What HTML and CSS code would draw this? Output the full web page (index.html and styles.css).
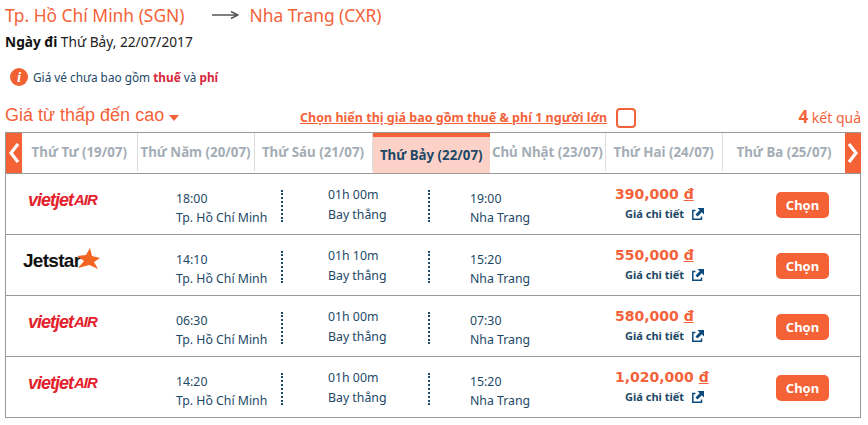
FILE: index.html
```html
<!DOCTYPE html>
<html lang="vi">
<head>
<meta charset="utf-8">
<title>Chọn chuyến bay</title>
<link rel="stylesheet" href="styles.css">
</head>
<body>
<header class="route">
  <span>Tp. Hồ Chí Minh (SGN)</span>
  <svg class="route-arrow" width="27" height="10" viewBox="0 0 27 10"><path d="M0 5H25M19 1.500L26 5L19 8.500" fill="none" stroke="#555" stroke-width="1.5"/></svg>
  <span>Nha Trang (CXR)</span>
</header>
<p class="depart"><b>Ngày đi</b> Thứ Bảy, 22/07/2017</p>
<p class="notice">
  <span class="info-icon">i</span>
  <span>Giá vé chưa bao gồm <b>thuế</b> và <b>phí</b></span>
</p>
<div class="toolbar">
  <div class="sort">Giá từ thấp đến cao <i class="caret"></i></div>
  <div class="tax-toggle"><a href="#">Chọn hiển thị giá bao gồm thuế &amp; phí 1 người lớn</a><span class="checkbox"></span></div>
  <div class="count"><b>4</b> kết quả</div>
</div>
<section class="board">
  <nav class="days">
    <button class="day-arrow"><svg width="12" height="22" viewBox="0 0 12 22"><path d="M10 2L3 11L10 20" fill="none" stroke="#fff" stroke-width="3.2"/></svg></button>
    <div class="day">Thứ Tư (19/07)</div>
    <div class="day">Thứ Năm (20/07)</div>
    <div class="day">Thứ Sáu (21/07)</div>
    <div class="day active">Thứ Bảy (22/07)</div>
    <div class="day">Chủ Nhật (23/07)</div>
    <div class="day">Thứ Hai (24/07)</div>
    <div class="day last">Thứ Ba (25/07)</div>
    <button class="day-arrow"><svg width="12" height="22" viewBox="0 0 12 22"><path d="M2 2L9 11L2 20" fill="none" stroke="#fff" stroke-width="3.2"/></svg></button>
  </nav>

  <article class="flight">
    <div class="logo vj"><span>vietjet</span><small>AIR</small></div>
    <div class="leg"><span>18:00</span><span>Tp. Hồ Chí Minh</span></div>
    <i class="dots"></i>
    <div class="leg mid"><span>01h 00m</span><span>Bay thẳng</span></div>
    <i class="dots"></i>
    <div class="leg end"><span>19:00</span><span>Nha Trang</span></div>
    <div class="fare"><div class="price">390,000 <u>đ</u></div><div class="detail">Giá chi tiết <svg class="ext" width="12" height="12" viewBox="0 0 12 12"><path d="M3.500 2.500H.8V11.200H9.500V8.500" fill="none" stroke="#0b4a7d" stroke-width="1.5"/><path d="M5.500 0H12V6.500L9.800 4.300L5.500 8.500L3.500 6.500L7.700 2.200Z" fill="#0b4a7d"/></svg></div></div>
    <a class="pick" href="#">Chọn</a>
  </article>
  <article class="flight">
    <div class="logo js"><span>Jetstar</span><svg width="24" height="22" viewBox="0 0 24 22"><polygon points="13,0 15,8 23,10 17,14 21,21 12.500,17 1,20 7,13 0,8 9,7" fill="#f26522"/></svg></div>
    <div class="leg"><span>14:10</span><span>Tp. Hồ Chí Minh</span></div>
    <i class="dots"></i>
    <div class="leg mid"><span>01h 10m</span><span>Bay thẳng</span></div>
    <i class="dots"></i>
    <div class="leg end"><span>15:20</span><span>Nha Trang</span></div>
    <div class="fare"><div class="price">550,000 <u>đ</u></div><div class="detail">Giá chi tiết <svg class="ext" width="12" height="12" viewBox="0 0 12 12"><path d="M3.500 2.500H.8V11.200H9.500V8.500" fill="none" stroke="#0b4a7d" stroke-width="1.5"/><path d="M5.500 0H12V6.500L9.800 4.300L5.500 8.500L3.500 6.500L7.700 2.200Z" fill="#0b4a7d"/></svg></div></div>
    <a class="pick" href="#">Chọn</a>
  </article>
  <article class="flight">
    <div class="logo vj"><span>vietjet</span><small>AIR</small></div>
    <div class="leg"><span>06:30</span><span>Tp. Hồ Chí Minh</span></div>
    <i class="dots"></i>
    <div class="leg mid"><span>01h 00m</span><span>Bay thẳng</span></div>
    <i class="dots"></i>
    <div class="leg end"><span>07:30</span><span>Nha Trang</span></div>
    <div class="fare"><div class="price">580,000 <u>đ</u></div><div class="detail">Giá chi tiết <svg class="ext" width="12" height="12" viewBox="0 0 12 12"><path d="M3.500 2.500H.8V11.200H9.500V8.500" fill="none" stroke="#0b4a7d" stroke-width="1.5"/><path d="M5.500 0H12V6.500L9.800 4.300L5.500 8.500L3.500 6.500L7.700 2.200Z" fill="#0b4a7d"/></svg></div></div>
    <a class="pick" href="#">Chọn</a>
  </article>
  <article class="flight">
    <div class="logo vj"><span>vietjet</span><small>AIR</small></div>
    <div class="leg"><span>14:20</span><span>Tp. Hồ Chí Minh</span></div>
    <i class="dots"></i>
    <div class="leg mid"><span>01h 00m</span><span>Bay thẳng</span></div>
    <i class="dots"></i>
    <div class="leg end"><span>15:20</span><span>Nha Trang</span></div>
    <div class="fare"><div class="price">1,020,000 <u>đ</u></div><div class="detail">Giá chi tiết <svg class="ext" width="12" height="12" viewBox="0 0 12 12"><path d="M3.500 2.500H.8V11.200H9.500V8.500" fill="none" stroke="#0b4a7d" stroke-width="1.5"/><path d="M5.500 0H12V6.500L9.800 4.300L5.500 8.500L3.500 6.500L7.700 2.200Z" fill="#0b4a7d"/></svg></div></div>
    <a class="pick" href="#">Chọn</a>
  </article>
</section>
</body>
</html>
```
FILE: styles.css
```css
* { box-sizing: border-box; }
html, body { margin: 0; padding: 0; }
body {
  width: 868px;
  height: 425px;
  overflow: hidden;
  background: #fff;
  padding: 0 7px 0 5px;
  font-family: "Noto Sans", "DejaVu Sans", sans-serif;
  color: #1d4866;
  font-size: 12px;
}
p { margin: 0; }
.route {
  display: flex;
  align-items: center;
  height: 32px;
  padding-bottom: 2px;
  color: #f4623a;
  font-size: 17.400px;
  white-space: nowrap;
}
.route-arrow { margin: 0 11px 0 27px; }
.depart { height: 19px; line-height: 19px; font-size: 13.700px; color: #222; }
.depart b { color: #111; }
.notice {
  display: flex;
  align-items: center;
  gap: 5px;
  margin: 16px 0 0 5px;
  height: 20px;
  font-size: 11.800px;
}
.notice b { color: #d7263d; }
.info-icon {
  width: 18px;
  height: 18px;
  border-radius: 50%;
  background: #f26133;
  color: #fff;
  font: italic bold 15px/18px "Liberation Serif", serif;
  text-align: center;
}
.toolbar {
  display: flex;
  align-items: center;
  height: 28px;
  margin: 16px 0 1px;
  white-space: nowrap;
}
.sort { width: 295px; margin-top: -3px; font-size: 18px; color: #f4623a; font-family: "Liberation Sans", sans-serif; }
.caret {
  display: inline-block;
  margin: 4px 0 0;
  vertical-align: middle;
  border: 5.500px solid transparent;
  border-top: 6px solid #f4623a;
  border-bottom: 0;
}
.tax-toggle { display: flex; align-items: center; gap: 9px; padding-top: 1px; }
.tax-toggle a { color: #f4623a; font-weight: 700; font-size: 12.540px; text-decoration: underline; }
.checkbox { width: 20px; height: 20px; border: 2px solid #f4623a; border-radius: 4px; }
.count { margin: -2px 0 0 auto; font-size: 14px; color: #f4623a; }
.count b { font-size: 17px; }
.board { border: 1px solid #999; width: 856px; }
.days {
  display: grid;
  grid-template-columns: 16px 115.500px 117px 118px 117.500px 115.700px 117px 122.800px 16px;
  height: 41px;
  border-bottom: 1px solid #999;
}
.day-arrow {
  border: 0;
  padding: 0;
  background: #f46235;
  display: flex;
  align-items: center;
  justify-content: center;
}
.day {
  display: flex;
  align-items: center;
  justify-content: center;
  border-right: 1px solid #ddd;
  color: #a4adb5;
  font-weight: 700;
  font-size: 13.300px;
  white-space: nowrap;
  margin-bottom: 2px;
}
.day.last { border-right: 0; }
.day.active {
  margin-bottom: 0;
  background: #fcd2c8;
  border-top: 4px solid #f46235;
  border-right: 0;
  color: #1d4866;
}
.flight {
  display: grid;
  grid-template-columns: 170px 105px 1px 146px 1px 130px 217px 1fr;
  align-items: center;
  height: 61px;
  border-bottom: 1px solid #999;
}
.flight:last-child { border-bottom: 0; height: 60px; }
.logo { display: flex; align-items: center; margin-top: -8px; }
.logo.vj { color: #e3212b; font: italic 700 18px/20px "Liberation Sans", sans-serif; letter-spacing: -1px; padding-left: 22px; }
.logo.vj small { font-size: 15px; margin-left: 1px; }
.logo.js { color: #111; font: 700 19px/24px "Liberation Sans", sans-serif; letter-spacing: -.7px; padding-left: 17px; }
.logo.js svg { margin-left: -3px; margin-top: -5px; flex: none; }
.leg { display: flex; flex-direction: column; gap: 2px; font-size: 12.300px; line-height: 17px; white-space: nowrap; margin-top: 8px; }
.mid { gap: 3px; margin: 0 0 0 46px; }
.end { margin-left: 41px; }
.dots { height: 32px; width: 0; border-left: 2px dotted #1d4866; margin-top: 4px; }
.fare { margin-left: 56px; white-space: nowrap; margin-top: -4px; }
.price { color: #f4623a; font: 700 14px/20px "DejaVu Sans", sans-serif; }
.detail { display: flex; align-items: center; gap: 8px; margin: 3px 0 0 10px; font-weight: 700; font-size: 11px; line-height: 14px; }
.pick {
  justify-self: start;
  width: 53px;
  height: 26px;
  margin-top: 2px;
  border-radius: 5px;
  background: #f46235;
  color: #fff;
  text-align: center;
  text-decoration: none;
  font-weight: 700;
  font-size: 13px;
  line-height: 26px;
}
```
